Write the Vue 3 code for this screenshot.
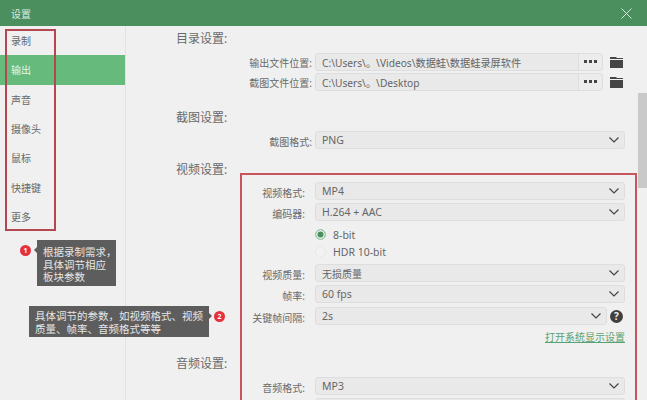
<script setup>
const navItems = ['录制', '输出', '声音', '摄像头', '鼠标', '快捷键', '更多']
const pathRows = [
  { label: '输出文件位置:', value: 'C:\\Users\\。\\Videos\\数据蛙\\数据蛙录屏软件' },
  { label: '截图文件位置:', value: 'C:\\Users\\。\\Desktop' }
]
</script>

<template>
  <div class="app">
    <header class="titlebar">
      <span>设置</span>
      <svg class="close" width="11" height="11" viewBox="0 0 11 11" fill="none">
        <path d="M.5.5l10 10M10.5.5l-10 10" stroke="#d4e8da" stroke-width="1" />
      </svg>
    </header>

    <div class="main">
      <nav class="sidebar">
        <div v-for="item in navItems" :key="item" class="nav-item" :class="{ active: item === '输出' }">{{ item }}</div>
      </nav>

      <div class="content">
        <section class="paths">
          <h3 class="title">目录设置:</h3>
          <div class="path-list">
            <div v-for="row in pathRows" :key="row.label" class="row">
              <label class="label wide">{{ row.label }}</label>
              <div class="field path">
                <span class="value">{{ row.value }}</span>
                <span class="more">
                  <svg width="13" height="4" viewBox="0 0 13 4"><path d="M0 0h3v3H0zM5 0h3v3H5zM10 0h3v3h-3z" fill="#454545" /></svg>
                </span>
              </div>
              <svg class="folder" width="13" height="11" viewBox="0 0 13 11"><path d="M0 0h6l1 1h6v1H0zM0 3h13v8H0z" fill="#454545" /></svg>
            </div>
          </div>
        </section>

        <section class="shots">
          <h3 class="title">截图设置:</h3>
          <div class="row">
            <label class="label wide">截图格式:</label>
            <div class="field select grow">
              <span class="value">PNG</span>
              <svg class="chev" width="10" height="6" viewBox="0 0 10 6" fill="none"><path d="M.5.5L5 5 9.500.5" stroke="#444" stroke-width="1.200" /></svg>
            </div>
          </div>
        </section>

        <section class="video">
          <h3 class="title video-title">视频设置:</h3>
          <div class="box">
            <div class="stack">
              <div class="row">
                <label class="label">视频格式:</label>
                <div class="field select grow"><span class="value">MP4</span>
                  <svg class="chev" width="10" height="6" viewBox="0 0 10 6" fill="none"><path d="M.5.5L5 5 9.500.5" stroke="#444" stroke-width="1.200" /></svg>
                </div>
              </div>
              <div class="row">
                <label class="label">编码器:</label>
                <div class="field select grow"><span class="value">H.264 + AAC</span>
                  <svg class="chev" width="10" height="6" viewBox="0 0 10 6" fill="none"><path d="M.5.5L5 5 9.500.5" stroke="#444" stroke-width="1.200" /></svg>
                </div>
              </div>
            </div>

            <div class="radios">
              <div class="radio-row"><span class="radio on"></span><span>8-bit</span></div>
              <div class="radio-row"><span class="radio"></span><span>HDR 10-bit</span></div>
            </div>

            <div class="stack">
              <div class="row">
                <label class="label">视频质量:</label>
                <div class="field select grow"><span class="value cjk">无损质量</span>
                  <svg class="chev" width="10" height="6" viewBox="0 0 10 6" fill="none"><path d="M.5.5L5 5 9.500.5" stroke="#444" stroke-width="1.200" /></svg>
                </div>
              </div>
              <div class="row">
                <label class="label">帧率:</label>
                <div class="field select grow"><span class="value">60 fps</span>
                  <svg class="chev" width="10" height="6" viewBox="0 0 10 6" fill="none"><path d="M.5.5L5 5 9.500.5" stroke="#444" stroke-width="1.200" /></svg>
                </div>
              </div>
              <div class="row key-row">
                <label class="label">关键帧间隔:</label>
                <div class="field select short"><span class="value">2s</span>
                  <svg class="chev" width="10" height="6" viewBox="0 0 10 6" fill="none"><path d="M.5.5L5 5 9.500.5" stroke="#444" stroke-width="1.200" /></svg>
                </div>
                <span class="help">?</span>
              </div>
            </div>

            <a class="link">打开系统显示设置</a>

            <h3 class="title audio-title">音频设置:</h3>
            <div class="stack">
              <div class="row">
                <label class="label">音频格式:</label>
                <div class="field select grow"><span class="value">MP3</span>
                  <svg class="chev" width="10" height="6" viewBox="0 0 10 6" fill="none"><path d="M.5.5L5 5 9.500.5" stroke="#444" stroke-width="1.200" /></svg>
                </div>
              </div>
              <div class="row">
                <label class="label"></label>
                <div class="field select grow"></div>
              </div>
            </div>
          </div>
        </section>
      </div>

      <div class="scrollbar"><div class="thumb"></div></div>
    </div>

    <div class="nav-outline"></div>

    <div class="callout callout-one">
      <span class="badge">1</span>
      <div class="bubble">根据录制需求，<br />具体调节相应<br />板块参数</div>
    </div>
    <div class="callout callout-two">
      <div class="bubble">具体调节的参数，如视频格式、视频<br />质量、帧率、音频格式等等</div>
      <span class="badge">2</span>
    </div>
  </div>
</template>

<style>
html, body { margin: 0; background: #f0f0f0; }
</style>

<style scoped>
.app {
  position: relative;
  width: 647px;
  height: 400px;
  overflow: hidden;
  display: flex;
  flex-direction: column;
  background: #f0f0f0;
  color: #666;
  font-family: "Noto Sans", "Noto Sans CJK SC", sans-serif;
  font-size: 10.5px;
}
.titlebar {
  flex: none;
  height: 26px;
  padding: 0 15px 0 11px;
  display: flex;
  align-items: center;
  justify-content: space-between;
  background: #4b8f5f;
  color: #dcebe0;
  font-size: 10px;
}
.main { flex: 1; min-height: 0; display: flex; }
.sidebar {
  flex: none;
  width: 125px;
  border-right: 1px solid #e2e2e2;
  display: grid;
  grid-auto-rows: 29.33px;
  align-content: start;
}
.nav-item {
  display: flex;
  align-items: center;
  padding-left: 11px;
  font-size: 10px;
  color: #686868;
}
.nav-item.active { background: #66bb7c; color: #e6f5ea; }
.content { flex: 1; min-width: 0; }
.title {
  margin: 0;
  height: 16px;
  line-height: 18px;
  font-size: 12px;
  font-weight: 400;
  color: #6a6a6a;
  white-space: nowrap;
}
.paths { padding: 4px 13px 0 50px; }
.path-list { margin-top: 7px; display: flex; flex-direction: column; gap: 2px; }
.shots { margin-top: 18px; padding: 0 13px 0 50px; }
.shots .row { margin-top: 6px; }
.shots .label { padding-top: 2px; }
.row { display: flex; align-items: center; height: 18px; }
.label {
  flex: none;
  width: 63px;
  margin-right: 10px;
  text-align: right;
  font-size: 10px;
  color: #6a6a6a;
  white-space: nowrap;
}
.box .label { padding-top: 3px; }
.label.wide { width: 136px; margin-right: 3px; }
.field {
  height: 18px;
  box-sizing: border-box;
  display: flex;
  align-items: center;
  background: #e9e9e9;
  border: 1px solid #dedede;
  border-radius: 3px;
  color: #666;
}
.value { padding-left: 6px; white-space: nowrap; }
.value.cjk { font-size: 10px; }
.grow { flex: 1; }
.path { width: 288px; justify-content: space-between; }
.path .value { font-size: 10.2px; }
.more {
  align-self: stretch;
  width: 24px;
  flex: none;
  display: flex;
  align-items: center;
  justify-content: center;
  background: #ececec;
  border-left: 1px solid #dedede;
  border-radius: 0 3px 3px 0;
  box-sizing: border-box;
}
.folder { margin-left: 7px; flex: none; }
.select { justify-content: space-between; }
.chev { margin-right: 5px; flex: none; }
.video { margin-top: 12px; display: flex; align-items: flex-start; padding-left: 50px; }
.video-title { flex: none; width: 64px; }
.box {
  flex: 1;
  min-width: 0;
  margin: 12px 1px 0 0;
  height: 300px;
  padding: 7px 10px 0 0;
  box-sizing: border-box;
  border: 2px solid #c8545c;
  border-bottom: none;
}
.stack { display: flex; flex-direction: column; gap: 3px; }
.radios { margin: 5px 0 4px 73px; display: flex; flex-direction: column; }
.radio-row { height: 17px; display: flex; align-items: center; gap: 7px; color: #666; }
.radio {
  width: 11px;
  height: 11px;
  box-sizing: border-box;
  border-radius: 50%;
  border: 1px solid #e8e8e8;
  background: #f2f2f2;
}
.radio.on { border: 1px solid #9fcdad; background: #4b8f5f; box-shadow: inset 0 0 0 1.500px #e6f1e9; }
.key-row { margin-top: 1px; }
.short { width: 292px; flex: none; }
.help {
  flex: none;
  width: 13px;
  height: 13px;
  margin-left: 3px;
  border-radius: 50%;
  background: #404040;
  color: #f0f0f0;
  font-size: 10px;
  font-weight: 700;
  line-height: 13px;
  text-align: center;
}
.link {
  display: block;
  margin-top: 5px;
  height: 14px;
  line-height: 14px;
  text-align: right;
  font-size: 10px;
  color: #5aa273;
  text-decoration: underline;
}
.audio-title { margin: 11px 0 0 -66px; }
.audio-title + .stack { margin-top: 6px; }
.nav-outline {
  position: absolute;
  left: 5px;
  top: 29px;
  width: 51px;
  height: 202px;
  box-sizing: border-box;
  border: 2px solid #b2474f;
}
.callout { position: absolute; display: flex; align-items: flex-start; color: #e6e6e6; }
.callout-one { left: 20px; top: 240px; gap: 6px; }
.callout-two { left: 29px; top: 306px; gap: 5px; }
.bubble {
  position: relative;
  background: #5d5d5d;
  font-size: 10.500px;
  line-height: 12.500px;
  white-space: nowrap;
}
.callout-one .bubble { width: 79px; height: 46px; box-sizing: border-box; padding: 6px 0 0 6px; }
.callout-two .bubble { width: 180px; height: 31px; box-sizing: border-box; padding: 4px 0 0 6px; }
.callout-one .bubble::before {
  content: "";
  position: absolute;
  left: -3px;
  top: 7px;
  border-style: solid;
  border-width: 3px 3px 3px 0;
  border-color: transparent #5d5d5d transparent transparent;
}
.callout-two .bubble::after {
  content: "";
  position: absolute;
  right: -3px;
  top: 7px;
  border-style: solid;
  border-width: 3px 0 3px 3px;
  border-color: transparent transparent transparent #5d5d5d;
}
.badge {
  flex: none;
  width: 11px;
  height: 11px;
  margin-top: 4.500px;
  border-radius: 50%;
  background: #e6303c;
  color: #fff;
  font-size: 7px;
  font-weight: 700;
  line-height: 11px;
  text-align: center;
}
.scrollbar { flex: none; width: 9px; }
.thumb { margin-top: 67px; height: 95px; background: #c9c9c9; }
</style>
